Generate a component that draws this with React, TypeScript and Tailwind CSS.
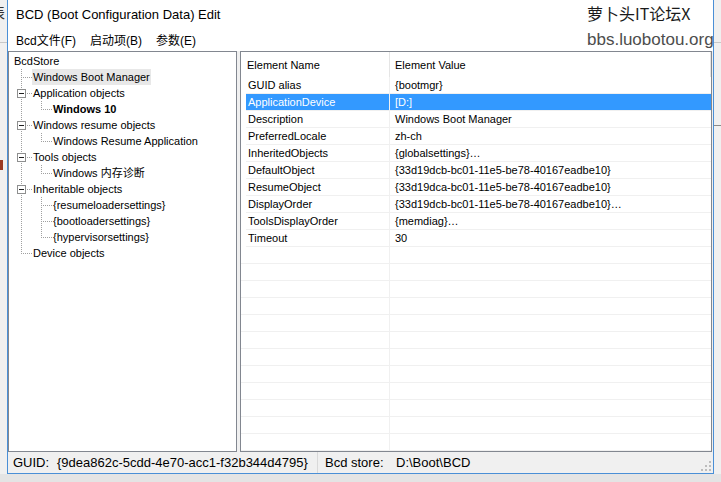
import React from 'react';

type Kind = 'line' | 'tee' | 'elbow';

function Guide({ kind, box }: { kind: Kind; box?: boolean }) {
  const dots: React.ReactElement[] = [];
  if (kind === 'line' || kind === 'tee') {
    for (let y = 0; y < 16; y += 2) dots.push(<rect key={'v' + y} x={9} y={y} width={1} height={1} />);
  }
  if (kind === 'elbow') {
    for (let y = 0; y <= 8; y += 2) dots.push(<rect key={'v' + y} x={9} y={y} width={1} height={1} />);
  }
  if (kind === 'tee' || kind === 'elbow') {
    for (let x = 11; x < 20; x += 2) dots.push(<rect key={'h' + x} x={x} y={8} width={1} height={1} />);
  }
  return (
    <svg width={20} height={16} viewBox="0 0 20 16" shapeRendering="crispEdges" className="shrink-0">
      <g fill="#a0a0a0">{dots}</g>
      {box && (
        <g>
          <rect x={5.5} y={4.5} width={8} height={8} fill="#ffffff" stroke="#8e8f8f" strokeWidth={1} />
          <rect x={7} y={8} width={5} height={1} fill="#1f1f1f" />
        </g>
      )}
    </svg>
  );
}

type TreeRow = { levels: Kind[]; text: string; box?: boolean; bold?: boolean; hl?: boolean };

const tree: TreeRow[] = [
  { levels: [], text: 'BcdStore' },
  { levels: ['tee'], text: 'Windows Boot Manager', hl: true },
  { levels: ['tee'], box: true, text: 'Application objects' },
  { levels: ['line', 'elbow'], text: 'Windows 10', bold: true },
  { levels: ['tee'], box: true, text: 'Windows resume objects' },
  { levels: ['line', 'elbow'], text: 'Windows Resume Application' },
  { levels: ['tee'], box: true, text: 'Tools objects' },
  { levels: ['line', 'elbow'], text: 'Windows 内存诊断' },
  { levels: ['tee'], box: true, text: 'Inheritable objects' },
  { levels: ['line', 'tee'], text: '{resumeloadersettings}' },
  { levels: ['line', 'tee'], text: '{bootloadersettings}' },
  { levels: ['line', 'elbow'], text: '{hypervisorsettings}' },
  { levels: ['elbow'], text: 'Device objects' },
];

const rows: [string, string][] = [
  ['GUID alias', '{bootmgr}'],
  ['ApplicationDevice', '[D:]'],
  ['Description', 'Windows Boot Manager'],
  ['PreferredLocale', 'zh-ch'],
  ['InheritedObjects', '{globalsettings}…'],
  ['DefaultObject', '{33d19dcb-bc01-11e5-be78-40167eadbe10}'],
  ['ResumeObject', '{33d19dca-bc01-11e5-be78-40167eadbe10}'],
  ['DisplayOrder', '{33d19dcb-bc01-11e5-be78-40167eadbe10}…'],
  ['ToolsDisplayOrder', '{memdiag}…'],
  ['Timeout', '30'],
];

const UI = "font-['Liberation_Sans','Noto_Sans_CJK_SC',sans-serif]";

function Grip() {
  const pts = [
    [8, 0],
    [4, 4], [8, 4],
    [0, 8], [4, 8], [8, 8],
  ];
  return (
    <svg width={11} height={11} viewBox="0 0 11 11" shapeRendering="crispEdges">
      {pts.map(([x, y], i) => (
        <rect key={i} x={x} y={y} width={2} height={2} fill="#bcbcbc" />
      ))}
    </svg>
  );
}

export default function App() {
  const empty = Array.from({ length: 12 });
  return (
    <div className={`relative w-[721px] h-[482px] overflow-hidden bg-[#e9e9e9] ${UI} text-black`}>
      <div className="flex h-[474px]">
        {/* background left */}
        <div className="w-[7px] shrink-0 bg-[#f0f0f0] overflow-hidden flex flex-col">
          <div className="ml-[-9px] mt-[4px] h-[16px] text-[14px] leading-[16px] text-[#333] font-['Noto_Sans_CJK_SC',sans-serif]">表</div>
          <div className="mt-[22px] h-px bg-[#c8c8c8]" />
          <div className="mt-[117px] w-[3px] h-[10px] bg-[#9b3a22]" />
        </div>

        {/* window */}
        <div className="w-[707px] shrink-0 flex flex-col border-x border-b border-[#4a8fd6] bg-[#f0f0f0]">
          <div className="h-[30px] bg-white flex items-center pl-[8px] text-[13px]">BCD (Boot Configuration Data) Edit</div>
          <div className="h-[21px] bg-white flex items-center pl-[1px] text-[12px]">
            <span className="px-[7px]">Bcd文件(F)</span>
            <span className="px-[7px]">启动项(B)</span>
            <span className="px-[7px]">参数(E)</span>
          </div>

          <div className="h-[401px] flex text-[11px]">
            {/* tree */}
            <div className="w-[229px] shrink-0 border border-[#828790] bg-white pt-[1px] overflow-hidden">
              {tree.map((r, i) => (
                <div key={i} className={`h-[16px] flex items-center ${r.levels.length === 0 ? 'pl-[4px]' : 'pl-[3px]'}`}>
                  {r.levels.map((k, j) => (
                    <Guide key={j} kind={k} box={r.box && j === r.levels.length - 1} />
                  ))}
                  <span
                    className={`h-[16px] leading-[16px] px-[1px] whitespace-nowrap ${r.bold ? 'font-bold' : ''} ${r.hl ? 'bg-[#e8e8e8]' : ''}`}
                  >
                    {r.text}
                  </span>
                </div>
              ))}
            </div>

            <div className="w-[3px] shrink-0" />

            {/* list */}
            <div className="w-[472px] shrink-0 border border-[#828790] bg-white overflow-hidden flex flex-col">
              <div className="h-[25px] shrink-0 flex">
                <div className="w-[148px] shrink-0 pl-[6px] pt-[1px] flex items-center">Element Name</div>
                <div className="w-px bg-[#e5e5e5]" />
                <div className="flex-1 pl-[5px] pt-[1px] flex items-center">Element Value</div>
                <div className="w-px bg-[#e5e5e5]" />
              </div>
              {rows.map(([k, v], i) => {
                const sel = i === 1;
                return (
                  <div key={i} className="h-[17px] shrink-0 flex">
                    <div className="w-[5px] shrink-0" />
                    <div className={`w-[143px] shrink-0 pl-[2px] flex items-center border-b border-[#f0f0f0] whitespace-nowrap ${sel ? 'bg-[#3399ff] text-white' : ''}`}>{k}</div>
                    <div className="w-px shrink-0 bg-[#f0f0f0]" />
                    <div className={`flex-1 pl-[5px] flex items-center border-b border-[#f0f0f0] whitespace-nowrap ${sel ? 'bg-[#3399ff] text-white' : ''}`}>{v}</div>
                  </div>
                );
              })}
              {empty.map((_, i) => (
                <div key={'e' + i} className="h-[17px] shrink-0 flex border-b border-[#f0f0f0]">
                  <div className="w-[148px] shrink-0" />
                  <div className="w-px shrink-0 bg-[#f0f0f0]" />
                  <div className="flex-1" />
                </div>
              ))}
            </div>
            <div className="w-px shrink-0" />
          </div>

          {/* status bar */}
          <div className="h-[21px] flex items-center text-[13px] bg-[#f0f0f0]">
            <div className="w-[309px] shrink-0 pl-[5px] flex whitespace-nowrap">
              <span className="w-[44px]">GUID:</span>
              <span>{'{9dea862c-5cdd-4e70-acc1-f32b344d4795}'}</span>
            </div>
            <div className="w-px h-[21px] bg-[#d9d9d9]" />
            <div className="flex-1 pl-[7px] flex whitespace-nowrap">
              <span className="w-[71px]">Bcd store:</span>
              <span>D:\Boot\BCD</span>
            </div>
            <div className="self-end mb-[1px] mr-[1px]">
              <Grip />
            </div>
          </div>
        </div>

        {/* background right */}
        <div className="flex-1 bg-[#f0f0f0] flex flex-col">
          <div className="mt-[42px] h-px bg-[#c8c8c8]" />
          <div className="mt-[82px] h-px bg-[#8a8a8a]" />
        </div>
      </div>
      <div className="h-[8px] bg-[#e4e4e4]" />

      {/* watermark */}
      <div className="absolute left-[587px] top-[3px] flex flex-col leading-none pointer-events-none">
        <div className="text-[16px] leading-[20px] text-[#1a1a1a] font-['Noto_Sans_CJK_SC',sans-serif]">萝卜头IT论坛X</div>
        <div className="mt-[7px] text-[17px] leading-[20px] text-[#4d4d4d] font-['Liberation_Sans',sans-serif]">bbs.luobotou.org</div>
      </div>
    </div>
  );
}
